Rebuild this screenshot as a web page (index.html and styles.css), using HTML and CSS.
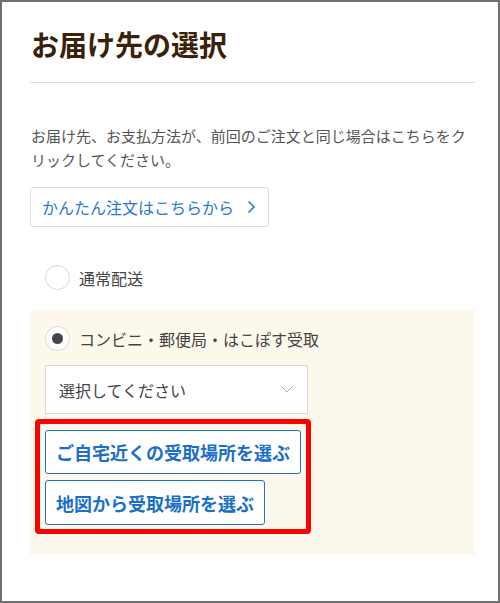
FILE: index.html
```html
<!DOCTYPE html>
<html lang="ja">
  <head>
    <meta charset="UTF-8" />
    <title>お届け先の選択</title>
    <link rel="stylesheet" href="styles.css">
  </head>

  <body>
    <div class="page">
      <h1 class="title">お届け先の選択</h1>

      <p class="lead">お届け先、お支払方法が、前回のご注文と同じ場合はこちらをクリックしてください。</p>

      <a class="quick" href="#">
        <span>かんたん注文はこちらから</span>
        <svg class="quick-arrow" width="9" height="14" viewBox="0 0 9 14">
          <path d="M1.5 1.5 L7 7 L1.5 12.5" fill="none" stroke="#2a78cf" stroke-width="1.6" />
        </svg>
      </a>

      <!-- 配送方法 -->
      <label class="option option-normal">
        <span class="radio"></span>
        <span class="option-text">通常配送</span>
      </label>

      <div class="panel">
        <label class="option">
          <span class="radio checked"></span>
          <span class="option-text">コンビニ・郵便局・はこぽす受取</span>
        </label>

        <div class="select">
          <span>選択してください</span>
          <svg width="12" height="7" viewBox="0 0 12 7">
            <path d="M0.5 0.5 L6 6 L11.5 0.5" fill="none" stroke="#aaa" stroke-width="1" />
          </svg>
        </div>

        <div class="pickup">
          <button class="pickup-btn" type="button">ご自宅近くの受取場所を選ぶ</button>
          <button class="pickup-btn" type="button">地図から受取場所を選ぶ</button>
        </div>
      </div>
    </div>
  </body>
</html>
```

FILE: styles.css
```css
* {
  padding: 0;
  margin: 0;
  box-sizing: border-box;
}

body {
  font-family: "Noto Sans CJK JP", "Noto Sans", sans-serif;
  color: #444;
  background: #fff;
}

.page {
  width: 500px;
  height: 603px;
  border: 2px solid #707070;
  padding: 0 23px 0 28px;
}

.title {
  font-size: 28px;
  line-height: 40px;
  font-weight: 700;
  color: #3a2109;
  padding: 22px 0 0 1px;
  height: 81px;
  border-bottom: 1px solid #dcdcdc;
}

.lead {
  margin-top: 41px;
  font-size: 15px;
  line-height: 24px;
  color: #555;
  padding-left: 1px;
}

.quick {
  margin-top: 15px;
  width: 239px;
  height: 40px;
  display: flex;
  align-items: center;
  justify-content: space-between;
  padding: 0 12px 0 11px;
  border: 1px solid #dcdcdc;
  border-radius: 3px;
  font-size: 16px;
  color: #2a78cf;
  text-decoration: none;
}

.option {
  display: flex;
  align-items: center;
  gap: 9px;
  padding-left: 15px;
  height: 25px;
  font-size: 16px;
  color: #444;
}

.option-normal {
  margin-top: 38px;
  margin-bottom: 20px;
}

.radio {
  width: 25px;
  height: 25px;
  border: 1px solid #d8d8d8;
  border-radius: 50%;
  background: #fff;
  display: flex;
  align-items: center;
  justify-content: center;
}

.radio.checked::after {
  content: "";
  width: 11px;
  height: 11px;
  border-radius: 50%;
  background: #454545;
}

.panel {
  background: #fdf8ec;
  padding: 16px 0 21px 15px;
}

.panel .option {
  padding-left: 0;
}

.select {
  margin-top: 14px;
  width: 263px;
  height: 49px;
  background: #fff;
  border: 1px solid #d8d8d8;
  display: flex;
  align-items: center;
  justify-content: space-between;
  padding: 0 14px 0 13px;
  font-size: 16px;
  color: #444;
}

/* 赤枠で囲んだ受取場所ボタン */
.pickup {
  margin: 5px 0 0 -10px;
  width: fit-content;
  display: flex;
  flex-direction: column;
  align-items: flex-start;
  gap: 6px;
  padding: 6px 5px 4px 5px;
  border: 5px solid #ff0000;
  border-radius: 4px;
}

.pickup-btn {
  height: 44px;
  padding: 0 10px;
  background: #fff;
  border: 1px solid #1a74cf;
  border-radius: 3px;
  font-family: "Noto Sans CJK JP", "Noto Sans", sans-serif;
  font-size: 18px;
  font-weight: 700;
  color: #1a6fca;
  cursor: pointer;
}

.pickup-btn + .pickup-btn {
  height: 45px;
}
```
